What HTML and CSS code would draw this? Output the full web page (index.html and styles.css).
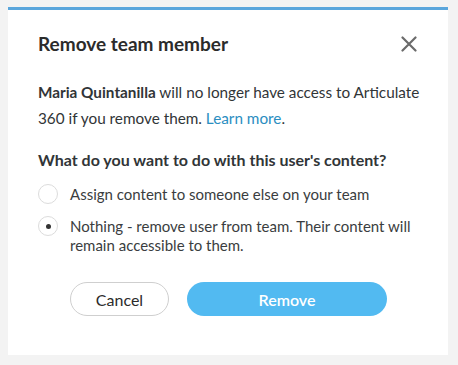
FILE: index.html
```html
<!DOCTYPE html>
<html>
<head>
<meta charset="utf-8">
<link rel="stylesheet" href="styles.css">
</head>
<body>
<div class="card">
  <div class="header">
    <h1 class="title">Remove team member</h1>
    <button class="close" aria-label="Close">
      <svg width="16" height="16" viewBox="0 0 16 16"><path d="M1.5 1.5 L14.5 14.5 M14.5 1.5 L1.5 14.5" stroke="#6b6b6b" stroke-width="2.2" stroke-linecap="round"/></svg>
    </button>
  </div>
  <p class="desc"><strong>Maria Quintanilla</strong> will no longer have access to Articulate 360 if you remove them. <a class="link" href="#">Learn more</a>.</p>
  <h2 class="question">What do you want to do with this user's content?</h2>
  <div class="options">
    <label class="option">
      <span class="radio"></span>
      <span class="opt-text">Assign content to someone else on your team</span>
    </label>
    <label class="option">
      <span class="radio checked"></span>
      <span class="opt-text">Nothing - remove user from team. Their content will remain accessible to them.</span>
    </label>
  </div>
  <div class="actions">
    <button class="btn btn-cancel">Cancel</button>
    <button class="btn btn-remove">Remove</button>
  </div>
</div>
</body>
</html>
```
FILE: styles.css
```css
html, body {
  margin: 0;
  padding: 0;
}
body {
  background: #f3f3f3;
  font-family: Lato, "Open Sans", sans-serif;
  color: #313537;
  width: 458px;
  height: 365px;
  overflow: hidden;
}
.card {
  margin: 7px 0 0 8px;
  width: 440px;
  height: 348px;
  box-sizing: border-box;
  background: #fff;
  border-top: 3px solid #5aa6dc;
  padding: 20px 31px 0 30px;
}
.header {
  display: flex;
  justify-content: space-between;
  align-items: center;
  height: 26px;
}
.title {
  margin: 0;
  font-size: 19px;
  font-weight: 700;
  color: #2b2b2b;
}
.close {
  border: 0;
  background: none;
  padding: 0;
  width: 16px;
  height: 16px;
  display: flex;
  margin-top: 2px;
}
.desc {
  margin: 23px -6px 0 0;
  font-size: 15.3px;
  line-height: 26px;
}
.desc strong {
  font-weight: 700;
}
.link {
  color: #2a8ec1;
  text-decoration: none;
}
.question {
  margin: 18px 0 0;
  font-size: 16px;
  font-weight: 700;
  line-height: 22px;
}
.options {
  display: flex;
  flex-direction: column;
  gap: 13px;
  margin-top: 14px;
}
.option {
  display: flex;
  align-items: flex-start;
  gap: 12px;
  font-size: 15px;
  line-height: 19px;
}
.radio {
  flex: none;
  width: 20px;
  height: 20px;
  box-sizing: border-box;
  border: 1px solid #dcdcdc;
  border-radius: 50%;
  display: flex;
  align-items: center;
  justify-content: center;
  margin-top: -1px;
}
.radio.checked::after {
  content: "";
  width: 5px;
  height: 5px;
  border-radius: 50%;
  background: #333;
}
.opt-text {
  color: #3a3d40;
}
.actions {
  display: flex;
  gap: 18px;
  margin: 27px 0 0 32px;
}
.btn {
  height: 34px;
  border-radius: 17px;
  font-family: Lato, "Open Sans", sans-serif;
  font-size: 16px;
  padding: 0;
  cursor: pointer;
}
.btn-cancel {
  width: 99px;
  background: #fff;
  border: 1px solid #cfcfcf;
  color: #2b2b2b;
}
.btn-remove {
  width: 200px;
  background: #52baf1;
  border: 0;
  color: #fff;
  font-weight: 600;
}
```
